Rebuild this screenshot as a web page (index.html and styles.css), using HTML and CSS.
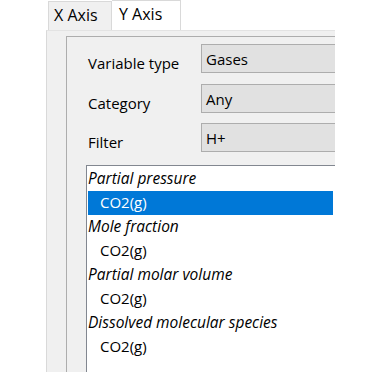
FILE: index.html
```html
<!DOCTYPE html>
<html>
<head>
<meta charset="utf-8">
<link rel="stylesheet" href="styles.css">
</head>
<body>
<div class="root">
  <div class="tabs">
    <div class="tab">X Axis</div>
    <div class="tab active">Y Axis</div>
  </div>
  <div class="page">
    <div class="group">
      <div class="row first">
        <div class="label">Variable type</div>
        <div class="combo">Gases</div>
      </div>
      <div class="row second">
        <div class="label">Category</div>
        <div class="combo">Any</div>
      </div>
      <div class="row third">
        <div class="label">Filter</div>
        <div class="combo">H+</div>
      </div>
      <div class="list">
        <div class="head">Partial pressure</div>
        <div class="item selected">CO2(g)</div>
        <div class="head">Mole fraction</div>
        <div class="item">CO2(g)</div>
        <div class="head">Partial molar volume</div>
        <div class="item">CO2(g)</div>
        <div class="head">Dissolved molecular species</div>
        <div class="item">CO2(g)</div>
      </div>
    </div>
  </div>
</div>
</body>
</html>
```

FILE: styles.css
```css
html, body {
  margin: 0;
  padding: 0;
  background: #ffffff;
}
.root {
  width: 380px;
  height: 372px;
  overflow: hidden;
  font-family: "Open Sans", "Noto Sans", sans-serif;
  font-size: 15px;
  color: #000000;
}
.tabs {
  display: flex;
  align-items: flex-end;
  height: 30px;
  padding-left: 48px;
}
.tab {
  box-sizing: border-box;
  height: 29px;
  width: 64px;
  background: #f0f0f0;
  border: 1px solid #d9d9d9;
  border-bottom: none;
  font-size: 16px;
  line-height: 27px;
  padding-left: 5px;
}
.tab.active {
  height: 30px;
  width: 69px;
  background: #ffffff;
  border-left: none;
  padding-left: 7px;
  line-height: 26px;
}
.page {
  box-sizing: border-box;
  margin-left: 46px;
  width: 289px;
  height: 342px;
  background: #f0f0f0;
  border-left: 1px solid #d9d9d9;
  border-top: 1px solid #e3e3e3;
  padding-top: 5px;
  padding-left: 19px;
  overflow: hidden;
}
.group {
  box-sizing: border-box;
  width: 400px;
  height: 400px;
  border: 1px solid #adadad;
  padding-top: 7px;
  padding-left: 19px;
}
.row {
  display: flex;
  height: 29px;
}
.row.second {
  margin-top: 11px;
}
.row.third {
  margin-top: 10px;
}
.label {
  width: 113px;
  margin-left: 2px;
  padding-top: 5px;
  line-height: 28px;
}
.combo {
  box-sizing: border-box;
  flex: 1;
  height: 29px;
  background: #e1e1e1;
  border: 1px solid #adadad;
  padding-left: 4px;
  line-height: 28px;
}
.list {
  box-sizing: border-box;
  margin-top: 13px;
  width: 260px;
  height: 220px;
  background: #ffffff;
  border: 1px solid #828790;
  padding: 1px;
}
.head {
  height: 24px;
  line-height: 22px;
  font-style: italic;
  font-size: 15.5px;
  padding-left: 0;
}
.item {
  height: 24px;
  line-height: 23px;
  padding-left: 12px;
}
.item.selected {
  background: #0078d7;
  color: #ffffff;
  margin-right: 11px;
}
```
